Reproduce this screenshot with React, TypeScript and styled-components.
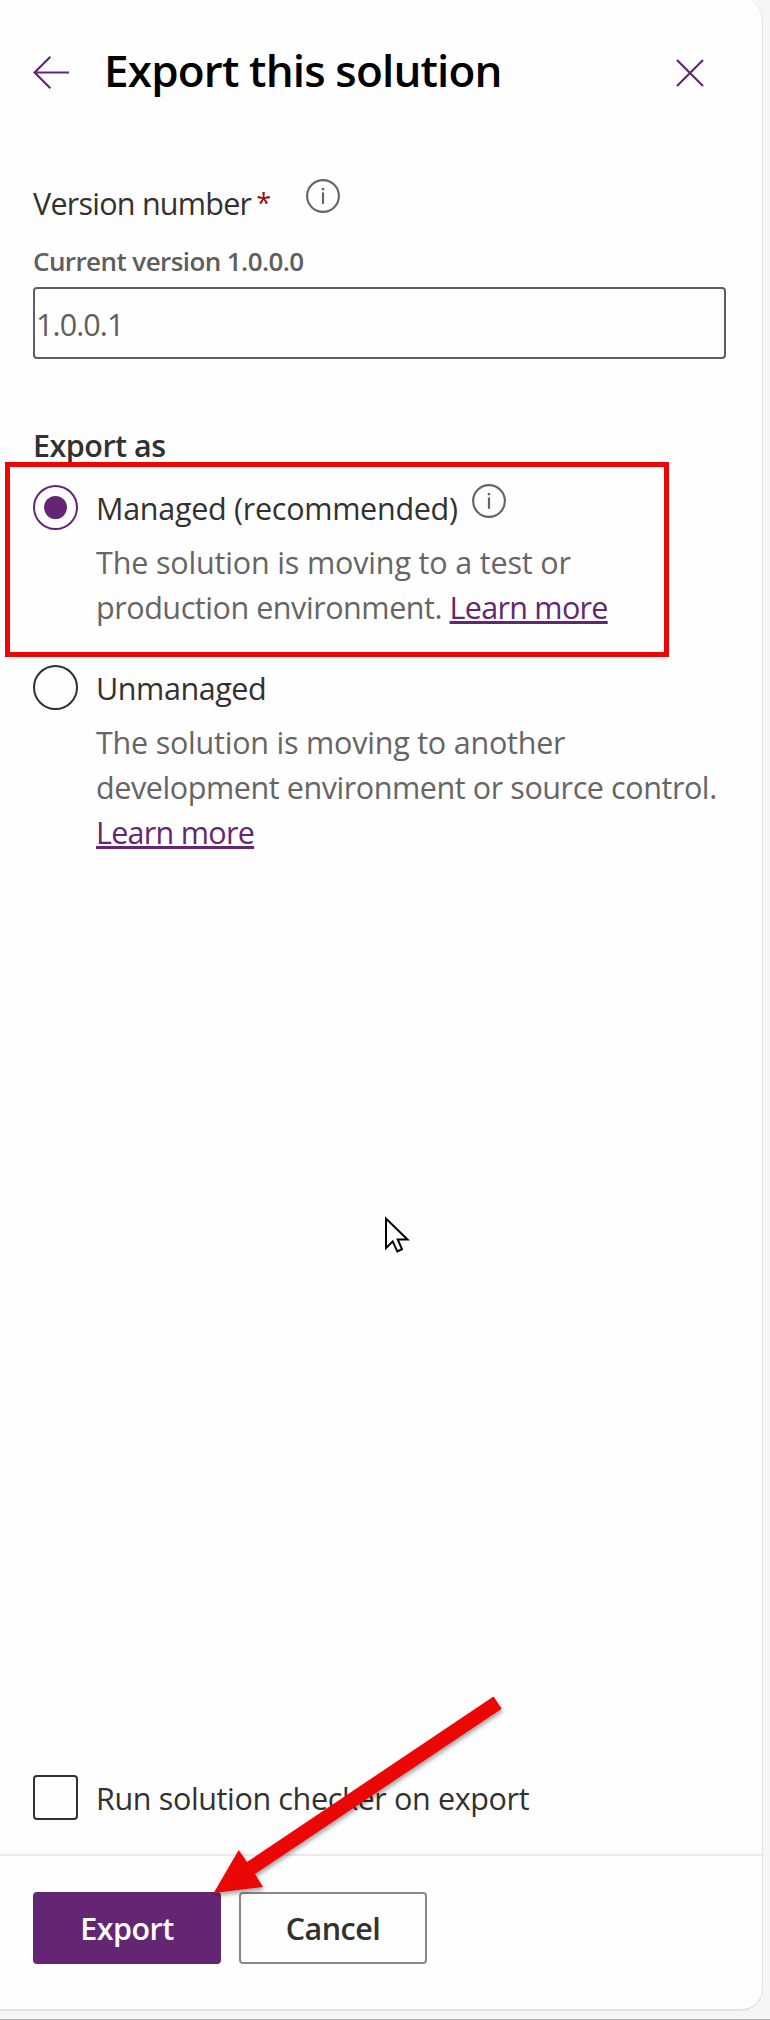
import React, { useState } from 'react';
import styled, { createGlobalStyle } from 'styled-components';

const purple = '#642673';
const red = '#ea0706';
const ink = '#323130';
const muted = '#666564';

const GlobalStyle = createGlobalStyle`
  *, *::before, *::after { box-sizing: border-box; }
  body {
    margin: 0;
    background: #f6f6f6;
    color: ${ink};
    font-family: 'Open Sans', 'Noto Sans', sans-serif;
    font-size: 30.5px;
    line-height: 45px;
  }
`;

const Page = styled.div`
  position: relative;
  width: 770px;
  height: 2020px;
  padding-right: 7px;
  overflow: hidden;
  border-bottom: 1px solid #b3b3b3;
  background: #f6f6f6;
`;

const Panel = styled.section`
  display: flex;
  flex-direction: column;
  height: 2013px;
  margin-top: -2px;
  border-right: 1px solid #e3e3e3;
  border-bottom: 2px solid #e3e3e3;
  border-radius: 0 22px 22px 0;
  background: #fefefe;
`;

const Header = styled.header`
  display: flex;
  align-items: center;
  height: 102px;
  padding: 42px 57px 0 32px;
`;

const IconButton = styled.button`
  display: flex;
  padding: 5px 0 0;
  border: 0;
  background: none;
  color: ${purple};
  svg { display: block; }
`;

const Title = styled.h1`
  flex: 1;
  margin: 0 0 0 34px;
  color: #000;
  font-size: 44px;
  font-weight: 600;
  line-height: 60px;
  letter-spacing: -0.83px;
`;

const Body = styled.main`
  display: flex;
  flex: 1;
  flex-direction: column;
  padding: 81px 36px 34px 33px;
`;

const Text = styled.span<{ $track?: number }>`
  letter-spacing: ${p => p.$track ?? 0}px;
  white-space: nowrap;
`;

const FieldLabel = styled.label`
  display: flex;
  height: 45px;
`;

const Required = styled.span`
  width: 14px;
  margin-left: 5px;
  color: #990f12;
  font-size: 27px;
  line-height: 43px;
`;

const InfoSlot = styled.span<{ $gap: number }>`
  display: inline-flex;
  height: 34px;
  margin-top: -2px;
  margin-left: ${p => p.$gap}px;
`;

const CurrentVersion = styled.div`
  margin-top: 17px;
  color: #605e5c;
  font-size: 26px;
  font-weight: 600;
  line-height: 36px;
  letter-spacing: -0.58px;
`;

const VersionInput = styled.input`
  width: 100%;
  height: 72px;
  margin-top: 8px;
  padding: 2px 0 0 1px;
  border: 2px solid #605e5c;
  border-radius: 4px;
  background: #fefefe;
  color: #605e5c;
  font: inherit;
  letter-spacing: -0.9px;
  outline: 0;
`;

const GroupTitle = styled.div`
  margin-top: 64px;
  font-weight: 600;
  letter-spacing: -0.5px;
`;

const Options = styled.div`
  display: flex;
  flex-direction: column;
  gap: 35px;
  margin-top: 17px;
`;

const Option = styled.div`
  position: relative;
  display: flex;
  gap: 18px;
`;

const Radio = styled.button<{ $checked: boolean }>`
  display: flex;
  flex: none;
  align-items: center;
  justify-content: center;
  width: 45px;
  height: 45px;
  padding: 0;
  border: 2px solid ${p => (p.$checked ? purple : ink)};
  border-radius: 50%;
  background: #fefefe;
  &::after {
    content: '';
    width: 23px;
    height: 23px;
    border-radius: 50%;
    background: ${p => (p.$checked ? purple : 'transparent')};
  }
`;

const OptionText = styled.div`
  display: flex;
  flex-direction: column;
  gap: 9px;
  padding-top: 1px;
`;

const OptionLabel = styled.div`
  display: flex;
  height: 45px;
`;

const Description = styled.div`
  display: flex;
  flex-direction: column;
  color: ${muted};
`;

const Link = styled.a`
  color: ${purple};
  letter-spacing: -0.72px;
  text-decoration: underline;
  text-decoration-thickness: 3px;
  text-underline-offset: 2px;
  text-decoration-skip-ink: none;
`;

const Highlight = styled.div`
  position: absolute;
  top: -23px;
  left: -28px;
  width: 664px;
  height: 195px;
  border: 5px solid ${red};
  pointer-events: none;
`;

const CheckRow = styled.div`
  display: flex;
  gap: 18px;
  height: 45px;
  margin-top: auto;
`;

const Checkbox = styled.button`
  width: 45px;
  height: 45px;
  padding: 0;
  border: 2px solid ${ink};
  border-radius: 4px;
  background: #fefefe;
`;

const CheckLabel = styled.div`
  padding-top: 1px;
`;

const Footer = styled.footer`
  display: flex;
  gap: 18px;
  height: 155px;
  padding: 36px 33px 0;
  border-top: 2px solid #eaeaea;
`;

const Button = styled.button<{ $primary?: boolean }>`
  width: 188px;
  height: 72px;
  padding: 0;
  border: 2px solid ${p => (p.$primary ? purple : '#8a8886')};
  border-radius: 4px;
  background: ${p => (p.$primary ? purple : '#fefefe')};
  color: ${p => (p.$primary ? '#fff' : ink)};
  font: inherit;
  font-weight: 600;
  letter-spacing: -0.5px;
`;

const Overlay = styled.svg<{ $x: number; $y: number; $shadow?: boolean }>`
  position: absolute;
  left: ${p => p.$x}px;
  top: ${p => p.$y}px;
  overflow: visible;
  filter: ${p => (p.$shadow ? 'drop-shadow(1px 3px 2px rgba(0, 0, 0, 0.35))' : 'none')};
  pointer-events: none;
`;

const BackIcon = () => (
  <svg width="38" height="38" viewBox="0 0 38 38" fill="none" stroke="currentColor" strokeWidth="2.2">
    <path d="M37 18.5H2.6M18.4 2.8 2.6 18.5 18.4 34.2" />
  </svg>
);

const CloseIcon = () => (
  <svg width="30" height="30" viewBox="0 0 30 30" fill="none" stroke="currentColor" strokeWidth="2.2">
    <path d="M2 2 28 28M28 2 2 28" />
  </svg>
);

const InfoIcon = () => (
  <svg width="34" height="34" viewBox="0 0 34 34">
    <circle cx="17" cy="17" r="15.9" fill="none" stroke={muted} strokeWidth="2.1" />
    <rect x="15.9" y="13.4" width="2.2" height="11.4" fill={muted} />
    <rect x="15.8" y="9" width="2.4" height="2.3" fill={muted} />
  </svg>
);

export default function App() {
  const [managed, setManaged] = useState(true);
  const [version, setVersion] = useState('1.0.0.1');

  return (
    <>
      <GlobalStyle />
      <Page>
        <Panel>
          <Header>
            <IconButton aria-label="Back"><BackIcon /></IconButton>
            <Title>Export this solution</Title>
            <IconButton aria-label="Close"><CloseIcon /></IconButton>
          </Header>

          <Body>
            <FieldLabel>
              <Text $track={-0.76}>Version number</Text>
              <Required>*</Required>
              <InfoSlot $gap={36}><InfoIcon /></InfoSlot>
            </FieldLabel>
            <CurrentVersion>Current version 1.0.0.0</CurrentVersion>
            <VersionInput value={version} onChange={e => setVersion(e.target.value)} />

            <GroupTitle>Export as</GroupTitle>
            <Options>
              <Option>
                <Radio $checked={managed} onClick={() => setManaged(true)} aria-label="Managed" />
                <OptionText>
                  <OptionLabel>
                    <Text $track={-0.28}>Managed (recommended)</Text>
                    <InfoSlot $gap={14}><InfoIcon /></InfoSlot>
                  </OptionLabel>
                  <Description>
                    <Text $track={-0.16}>The solution is moving to a test or</Text>
                    <Text $track={-0.44}>production environment. <Link>Learn more</Link></Text>
                  </Description>
                </OptionText>
                <Highlight />
              </Option>
              <Option>
                <Radio $checked={!managed} onClick={() => setManaged(false)} aria-label="Unmanaged" />
                <OptionText>
                  <OptionLabel><Text $track={-0.43}>Unmanaged</Text></OptionLabel>
                  <Description>
                    <Text $track={-0.22}>The solution is moving to another</Text>
                    <Text $track={-0.42}>development environment or source control.</Text>
                    <Text><Link>Learn more</Link></Text>
                  </Description>
                </OptionText>
              </Option>
            </Options>

            <CheckRow>
              <Checkbox aria-label="Run solution checker" />
              <CheckLabel><Text $track={-0.36}>Run solution checker on export</Text></CheckLabel>
            </CheckRow>
          </Body>

          <Footer>
            <Button $primary>Export</Button>
            <Button>Cancel</Button>
          </Footer>
        </Panel>

        <Overlay $x={384} $y={1214} width="28" height="40" viewBox="0 0 28 40">
          <path d="M2 4.5V34L8.7 27.4 13.3 37.5 18 35.2 13.7 25.5H23.5Z" fill="#fff" stroke="#000" strokeWidth="2" />
        </Overlay>

        <Overlay $x={213} $y={1696} $shadow width="290" height="200" viewBox="0 0 290 200">
          <path d="M.7 197 25.7 154 34 166 280.5.5 288.7 12.7 42 178 50 191Z" fill={red} />
        </Overlay>
      </Page>
    </>
  );
}
